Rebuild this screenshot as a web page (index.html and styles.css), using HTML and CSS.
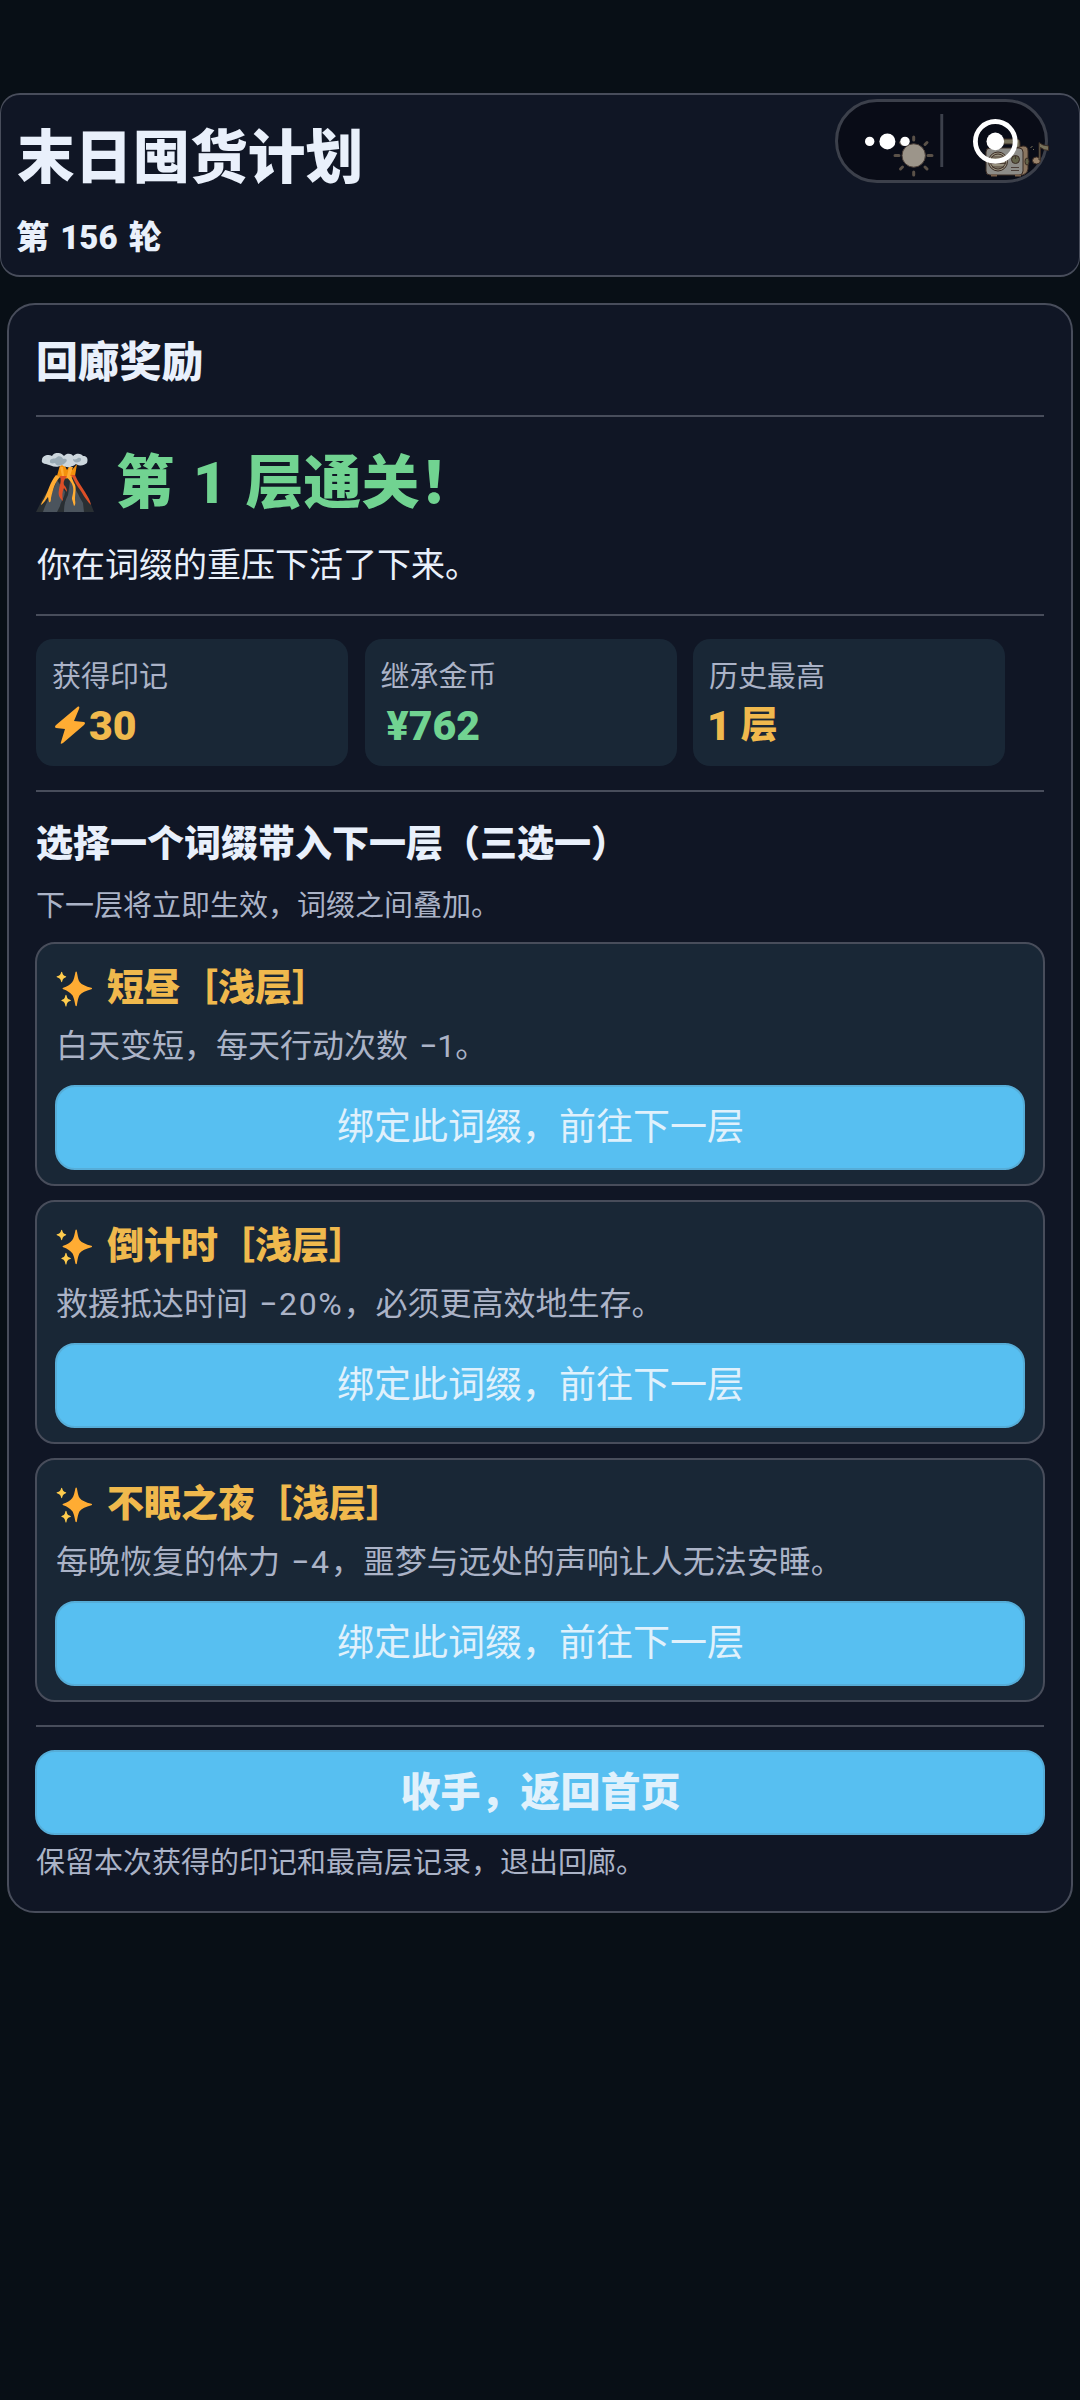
FILE: index.html
```html
<!DOCTYPE html>
<html lang="zh-CN">
<head>
<meta charset="utf-8">
<title>末日囤货计划</title>
<link rel="stylesheet" href="styles.css">
</head>
<body>
<svg class="defs" width="0" height="0" aria-hidden="true">
  <symbol id="sparkle" viewBox="0 0 36 36">
    <path fill="#ffac33" d="M34.35 16.27c-5.5-1.2-9.2-3.1-11.2-5.3C21.6 9.2 21 4.900 20.300 1.300c-.2-1-1.200-1-1.400 0-.7 3.600-1.600 7.900-3.200 9.700-2 2.200-4.900 4.200-8.600 5.300-.9.300-.9 1.100 0 1.400 3.700 1.100 6.600 3.400 8.600 5.600 1.600 1.800 2.500 6.500 3.200 10.200.2 1 1.200 1 1.400 0 .7-3.700 1.300-8.400 2.900-10.200 2-2.200 5.700-4.300 11.200-5.600.9-.2.900-1.200 0-1.430z"/>
    <path fill="#ffcc4d" d="M9.500 5.200C7.300 4.500 6.700 3.800 6 1.200c-.2-.7-.8-.7-1 0C4.300 3.800 3.600 4.500 1 5.200c-.6.200-.6.800 0 1C3.600 7 4.300 7.700 5 10.300c.2.700.8.700 1 0 .7-2.600 1.300-3.300 3.500-4.100.6-.2.600-.8 0-1zM14 28.200c-2.500-.7-3.100-1.400-3.800-4.500-.2-.7-.8-.7-1 0-.7 3.100-1.300 3.800-3.500 4.500-.6.200-.6.900 0 1.100 2.200.7 2.800 1.600 3.500 4.700.2.700.8.700 1 0 .7-3.100 1.300-4 3.800-4.700.6-.2.600-.9 0-1.100z"/>
  </symbol>
</svg>

<header class="topbar">
  <h1 class="app-title">末日囤货计划</h1>
  <p class="round">第 156 轮</p>
  <svg class="capsule" viewBox="835 99 216 84" width="216" height="84">
    <rect x="836.5" y="100.500" width="210" height="81" rx="40.500" fill="#090c17" stroke="#3c404b" stroke-width="3"/>
    <rect x="940.300" y="114" width="2.900" height="53" fill="#3c404b"/>
    <g stroke="#5a5148" stroke-width="3" stroke-linecap="round">
      <path d="M913.700 137v3M913.700 172v3M895 155.500h4M928 155.500h4M900.500 142.500l2 2M925 167l2 2M927 142.500l-2 2M902.500 167l-2 2"/>
    </g>
    <circle cx="913.700" cy="155.500" r="11.700" fill="#9c958a" stroke="#4c4039"/>
    <g stroke="#3b2c24" stroke-width="1">
      <path d="M1002 139h15q3 0 3 5v5h-4v-5h-14z" fill="#77725c"/>
      <path d="M1016 148l7-2q5 0 5 5v18q0 4-5 6h-8z" fill="#8b7660"/>
      <rect x="986" y="148" width="37" height="27" rx="4" fill="#8d8c88"/>
      <circle cx="998" cy="161.500" r="9.500" fill="#98917f"/>
      <circle cx="998" cy="161.500" r="7.500" fill="none"/>
      <circle cx="1015.500" cy="159.500" r="4" fill="#63634a"/>
      <path d="M1011 167.500h8M1011 170.500h8M991.500 157h13M990.500 160.500h15M990.500 163.500h15M992 167h12M1015.500 156v3" stroke-width=".8"/>
      <path d="M991 175.500h6M1015 175.500h6" stroke="#7a614c" stroke-width="2"/>
      <ellipse cx="1027" cy="161.500" rx="2" ry="3.500" fill="#63634a"/>
      <ellipse cx="1036.500" cy="160.500" rx="4" ry="3.500" fill="#9a846c"/>
      <path d="M1039 160v-17.500q3 3 9.500 3.500v4.500q-4.500 0-8-3v12.500z" fill="#77725c"/>
    </g>
    <path d="M1030.500 148l2-2M1033 150l1-1" stroke="#77725c"/>
    <g fill="#fff">
      <circle cx="869.700" cy="141.400" r="4.700"/><circle cx="887.400" cy="141.400" r="8"/><circle cx="905" cy="141.400" r="4.700"/>
      <circle cx="995.300" cy="141.400" r="8.800"/>
    </g>
    <circle cx="995.300" cy="141.400" r="19.900" fill="none" stroke="#fff" stroke-width="4.800"/>
  </svg>
</header>

<main class="panel">
  <h2 class="panel-title">回廊奖励</h2>
  <hr>
  <div class="cleared">
    <svg class="volcano" viewBox="0 0 58 59" width="58" height="59">
      <path fill="#292f33" d="M0 59l8-16 8-10 6-10h14l10 13 7 10 5 13z"/>
      <path fill="#4b545d" d="M7 59c3-10 9-17 14-32l8 12c-1 7-4 9-5 14l-3 6zM28 59c0-7 1-11 4-17l2-14c6 7 8 14 13 22l1 9z"/>
      <path fill="#f4900c" d="M24 12l-3 11q9 5 18 0l2-12-5 6-2-5-3 5-3-6z"/>
      <path fill="#ffac33" d="M24 14l2 9h2l-1-9zM33 14l-2 9h3l3-9zM20 22c-6 7-8 17-12 24-2 3-3 5-3 6 4-3 5-6 7-8l1 5q2 1 2-4c2-9 4-16 9-21zM30 23c3 4 6 6 7 11 1 5-1 9-1 12l2 7q2-1 1-6c0-8 2-13-1-17l-3-7z"/>
      <path fill="#dd4f27" d="M24 23h7c-2 3-4 5-3 9 2 2 3 4 3 7l-3-4c-2 4-2 8-1 13-4-3-5-7-4-11 0-4 3-8 1-14zM35 22h4c3 7 7 12 10 17 3 5 5 8 6 13-6-6-9-13-13-18-3-4-4-8-7-12z"/>
      <path fill="#ccd6dd" d="M6 7c0-5 7-6 10-4 3-5 10-3 12 0 3-4 9-2 9 0 4-4 9-2 10 0 5 0 5 4 4 7-3 2-6 4-11 1-5 4-10 4-14 1-6 4-12 0-16-1-3 0-5-2-4-4z"/>
      <path fill="#99aab5" d="M14 8c0-3 5-2 6-3 3-4 7 0 7 1 3-1 5 1 3 3-3 4-9 5-11 1-3 1-6 0-5-2zM37 6c2 1 4 0 5-1 4-1 4 3 1 4-3 1-6 0-6-3z"/>
    </svg>
    <strong class="cleared-text">第 1 层通关！</strong>
  </div>
  <p class="survived">你在词缀的重压下活了下来。</p>
  <hr>
  <div class="stats">
    <div class="stat"><span class="label">获得印记</span><strong class="value gold"><svg class="bolt" viewBox="0 0 31 38" width="31" height="38"><path fill="#ffac33" d="M24 0.500Q26 0 25 3L20 15l10 1q2 1 0 3L9 37q-3 2-2-1l4-13-9-1q-2-1 0-3z"/></svg>30</strong></div>
    <div class="stat"><span class="label">继承金币</span><strong class="value green money">¥762</strong></div>
    <div class="stat"><span class="label">历史最高</span><strong class="value gold floor">1<span class="unit">层</span></strong></div>
  </div>
  <hr>
  <h3 class="choose">选择一个词缀带入下一层（三选一）</h3>
  <p class="note">下一层将立即生效，词缀之间叠加。</p>
  <section class="cards">
    <article class="card">
      <h4 class="card-title"><svg class="spark" width="37" height="37"><use href="#sparkle"/></svg>短昼［浅层］</h4>
      <p class="desc">白天变短，每天行动次数 −1。</p>
      <button class="btn">绑定此词缀，前往下一层</button>
    </article>
    <article class="card">
      <h4 class="card-title"><svg class="spark" width="37" height="37"><use href="#sparkle"/></svg>倒计时［浅层］</h4>
      <p class="desc">救援抵达时间 <span class="num">−20%</span>，必须更高效地生存。</p>
      <button class="btn">绑定此词缀，前往下一层</button>
    </article>
    <article class="card">
      <h4 class="card-title"><svg class="spark" width="37" height="37"><use href="#sparkle"/></svg>不眠之夜［浅层］</h4>
      <p class="desc">每晚恢复的体力 <span class="num">−4</span>，噩梦与远处的声响让人无法安睡。</p>
      <button class="btn">绑定此词缀，前往下一层</button>
    </article>
  </section>
  <hr>
  <button class="btn leave">收手，返回首页</button>
  <p class="footnote">保留本次获得的印记和最高层记录，退出回廊。</p>
</main>
</body>
</html>
```
FILE: styles.css
```css
* { box-sizing: border-box; margin: 0; padding: 0; }

body {
  min-height: 2400px;
  padding-top: 93px;
  background: #080f16;
  color: #e9f0fb;
  font-family: Roboto, "Noto Sans CJK SC", sans-serif;
  font-kerning: none;
}

.defs { position: absolute; }

.topbar {
  position: relative;
  height: 184px;
  padding: 26px 16px 0;
  border: 2px solid #484d5b;
  border-width: 2px 1px;
  border-radius: 20px;
  background: #101625;
}

.app-title { font-size: 57.700px; line-height: 74px; font-weight: 900; }
.round { margin: 20px 0 0 -1px; font-size: 33px; line-height: 46px; font-weight: 900; word-spacing: 3px; }

.capsule { position: absolute; top: 4px; left: 834px; }

.panel {
  height: 1610px;
  margin: 26px 7px 0;
  padding: 0 27px;
  border: 2px solid #484d5b;
  border-radius: 28px;
  background: #101625;
}

hr { height: 2px; border: 0; background: #484d5b; }

.panel-title { padding: 29px 0 24px; font-size: 41.800px; line-height: 57px; font-weight: 900; }

.cleared { display: flex; align-items: flex-start; gap: 22px; height: 131px; padding-top: 36px; }
.cleared-text { color: #71d391; font-size: 58px; line-height: 61px; font-weight: 900; word-spacing: 4.500px; }

.survived { padding-left: 1px; height: 66px; font-size: 34px; line-height: 34px; }

.stats { display: flex; gap: 16.500px; padding: 23px 0 24px; }
.stat {
  display: flex;
  flex-direction: column;
  width: 312px;
  height: 127px;
  padding: 17px 16px 0;
  border-radius: 17px;
  background: #192736;
}
.label { color: #abb3c7; font-size: 29px; line-height: 42px; }
.value { display: flex; margin-top: 1px; font-size: 41px; line-height: 54px; font-weight: 900; }
.money { padding-left: 6px; }
.floor { margin-left: -2px; }
.unit { margin-left: 10px; font-size: 37px; }
.bolt { margin: 7px 4px 0 2px; }
.gold { color: #f0b94d; }
.green { color: #71d391; }

.choose { padding-top: 28px; font-size: 37px; line-height: 50px; font-weight: 900; }
.note { margin-top: 16px; color: #abb3c7; font-size: 29px; line-height: 40px; }

.cards { display: flex; flex-direction: column; gap: 14px; margin: 16px -1px 23px; }
.card {
  height: 244px;
  padding: 19px 18px 0;
  border: 2px solid #484d5b;
  border-radius: 20px;
  background: #192736;
}
.card-title { display: flex; align-items: center; color: #f0b94d; font-size: 37px; line-height: 52px; font-weight: 900; }
.spark { margin: 0 14px 0 1px; }
.desc { padding-left: 1px; margin-top: 9px; color: #abb3c7; font-size: 32px; line-height: 44px; word-spacing: 3px; }
.num { letter-spacing: 1.700px; }

.btn {
  display: block;
  width: 100%;
  height: 85px;
  margin-top: 17px;
  padding: 1px 0 0 1px;
  border: 2px solid #56add8;
  border-radius: 20px;
  background: #57bff1;
  color: #e0f1fc;
  font: 400 37px/54px Roboto, "Noto Sans CJK SC", sans-serif;
}
.leave { width: 1010px; margin: 23px -1px 0; font-size: 40px; font-weight: 900; }

.footnote { margin-top: 7px; color: #abb3c7; font-size: 29px; line-height: 42px; }
```
